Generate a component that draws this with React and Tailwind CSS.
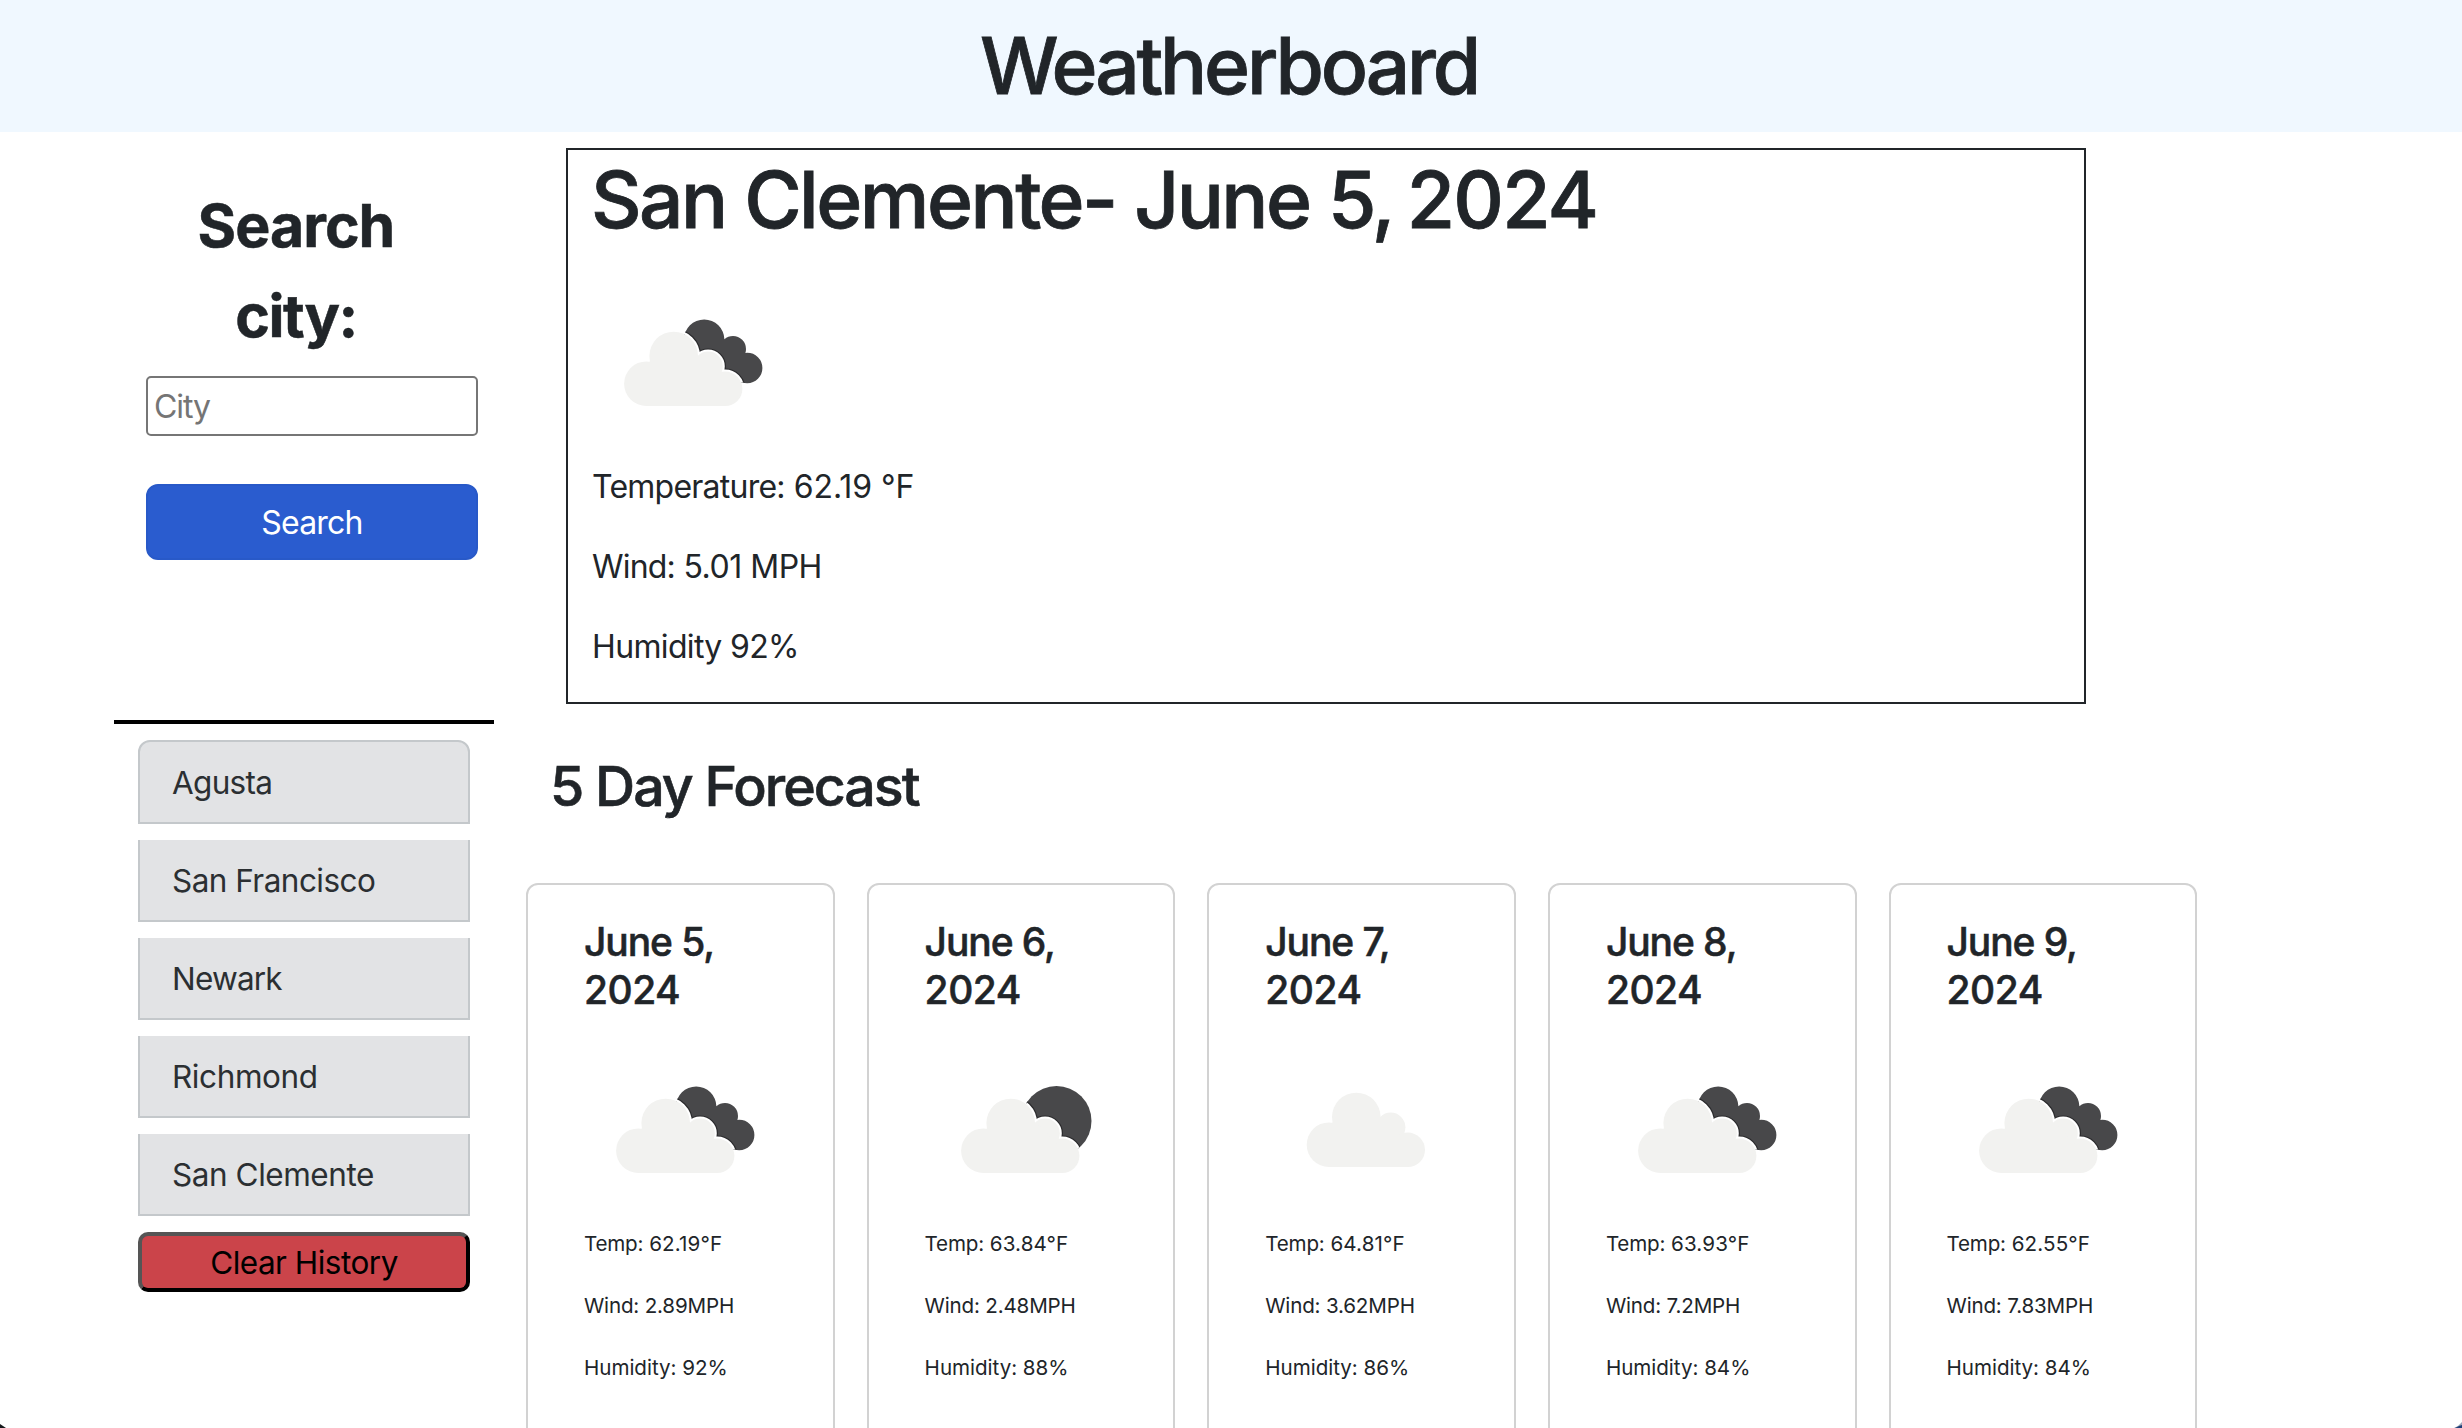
import React from "react";

const history = [
  { name: "Agusta", spacing: "tracking-[-0.69px]" },
  { name: "San Francisco", spacing: "tracking-[-0.54px]" },
  { name: "Newark", spacing: "tracking-[-0.8px]" },
  { name: "Richmond", spacing: "tracking-[-0.4px]" },
  { name: "San Clemente", spacing: "tracking-[-0.45px]" },
];

const forecast = [
  { day: "June 5,", year: "2024", icon: "broken", temp: "62.19", wind: "2.89", humidity: 92 },
  { day: "June 6,", year: "2024", icon: "few", temp: "63.84", wind: "2.48", humidity: 88 },
  { day: "June 7,", year: "2024", icon: "scattered", temp: "64.81", wind: "3.62", humidity: 86 },
  { day: "June 8,", year: "2024", icon: "broken", temp: "63.93", wind: "7.2", humidity: 84 },
  { day: "June 9,", year: "2024", icon: "broken", temp: "62.55", wind: "7.83", humidity: 84 },
];

function CloudShape(props) {
  return (
    <g {...props}>
      <circle cx="91.3" cy="87" r="24.3" />
      <circle cx="64" cy="114.7" r="22.3" />
      <circle cx="125.7" cy="97.3" r="14.7" />
      <circle cx="142.8" cy="119.8" r="17.2" />
      <path d="M64 137V96l6-6 21-10 30 10 18 20 4 10v17z" />
    </g>
  );
}

function BackShape({ kind }) {
  if (kind === "few") return <circle cx="131.5" cy="91" r="35" />;
  return (
    <>
      <circle cx="112.2" cy="76.6" r="20.2" />
      <circle cx="141" cy="86" r="13" />
      <circle cx="155.2" cy="105" r="15.2" />
      <path d="M112 90l20-13 12-1 9 14 4 6-3 24-44-8z" />
    </>
  );
}

function WeatherIcon({ kind, id, className }) {
  const offset =
    kind === "broken" ? "translate(-9.6 6)" : kind === "few" ? "translate(-5.6 6)" : "translate(0 0)";
  return (
    <svg viewBox="0 0 200 200" className={className} aria-hidden="true">
      {kind !== "scattered" && (
        <>
          <defs>
            <clipPath id={id}>
              <BackShape kind={kind} />
            </clipPath>
          </defs>
          <g clipPath={`url(#${id})`}>
            <rect width="200" height="200" fill="#48484a" />
            <g transform={offset}>
              <CloudShape fill="#2b2b2d" stroke="#2b2b2d" strokeWidth="6.4" />
              <CloudShape fill="#ffffff" stroke="#ffffff" strokeWidth="4" />
            </g>
          </g>
        </>
      )}
      <g transform={offset}>
        <CloudShape fill="#f2f2f0" />
      </g>
    </svg>
  );
}

function Sidebar() {
  return (
    <aside className="ml-[114px] w-[380px] shrink-0">
      <form className="ml-8 w-[332px] pt-[49px]" onSubmit={(e) => e.preventDefault()}>
        <label
          htmlFor="city"
          className="block w-[300px] text-center text-[59px] font-bold leading-[90px] [-webkit-text-stroke:0.5px_#212529]"
        >
          <span className="tracking-[-0.98px]">Search</span>{" "}
          <br />
          <span className="tracking-[-1.5px]">city:</span>
        </label>
        <input
          id="city"
          placeholder="City"
          className="mt-[15px] block h-[60px] w-full rounded-[5px] border-2 border-[#767676] bg-white pl-1.5 text-[32px] tracking-[-1.1px] placeholder:text-[#757575]"
        />
        <button className="mt-12 block h-[76px] w-full rounded-xl border-2 border-[#2859c8] bg-[#2a5ccf] pt-0.5 text-[32px] leading-[48px] tracking-[-0.81px] text-white">
          Search
        </button>
      </form>
      <div className="mt-40 h-1 bg-black" />
      <div className="ml-6 mt-4 flex w-[332px] flex-col gap-4">
        {history.map((city, i) => (
          <div
            key={city.name}
            className={`flex items-center border-2 border-[#c4c8cb] bg-[#e2e3e5] pl-8 pt-0.5 text-[31.5px] text-[#2b2f32] ${
              i === 0 ? "h-[84px] rounded-t-xl" : "h-[82px] border-t-0"
            } ${city.spacing}`}
          >
            {city.name}
          </div>
        ))}
        <button className="h-[60px] rounded-[10px] border-4 border-b-black border-l-[#555] border-r-black border-t-[#555] bg-[#cb444a] pt-0.5 text-[31.5px] leading-[48px] tracking-[-0.51px] text-black">
          Clear History
        </button>
      </div>
    </aside>
  );
}

function CurrentWeather() {
  return (
    <section className="ml-10 mt-4 h-[556px] w-[1520px] border-2 border-[#212529] pl-6 pt-0.5">
      <h2 className="-ml-px text-[78.4px] font-medium leading-[96px] tracking-[-2.52px] [-webkit-text-stroke:0.8px_#212529]">
        San Clemente- June 5, <span className="-ml-1 tracking-[-1.7px]">2024</span>
      </h2>
      <WeatherIcon kind="broken" id="back-current" className="mt-[15px] size-[200px]" />
      <div className="flex flex-col gap-8 text-[32px] leading-[48px]">
        <p className="tracking-[-0.08px]">
          <span className="tracking-[-0.76px]">Temperature:</span> 62.19 °F
        </p>
        <p className="tracking-[-0.5px]">
          <span className="tracking-[-0.8px]">Wind:</span> 5.01 MPH
        </p>
        <p className="tracking-[-0.65px]">Humidity 92%</p>
      </div>
    </section>
  );
}

function ForecastCard({ item, index }) {
  return (
    <article className="rounded-xl border-2 border-[#d2d2d2] bg-white pl-[55.8px] pt-[33px]">
      <h4 className="text-[39px] font-medium leading-[48px] [-webkit-text-stroke:0.5px_#212529]">
        <span className="block tracking-[-1.1px]">{item.day}</span>
        <span className="block tracking-[-0.5px]">{item.year}</span>
      </h4>
      <WeatherIcon kind={item.icon} id={`back-${index}`} className="mt-4 size-[200px]" />
      <div className="-mt-0.5 flex flex-col gap-[31px] text-[20.6px] leading-[31px]">
        <p className="tracking-[0.12px]">
          <span className="tracking-[-0.2px]">Temp:</span> {item.temp}°F
        </p>
        <p className="tracking-[-0.18px]">Wind: {item.wind}MPH</p>
        <p className="tracking-[-0.03px]">Humidity: {item.humidity}%</p>
      </div>
    </article>
  );
}

export default function App() {
  return (
    <div className="relative h-[1428px] w-full overflow-hidden bg-white font-['Inter',sans-serif] text-[#212529]">
      <header className="flex h-[132px] items-center justify-center bg-[#f0f8ff] pr-1">
        <h1 className="text-[78.4px] font-medium leading-[96px] tracking-[-3.15px] [-webkit-text-stroke:0.8px_#212529]">
          Weatherboard
        </h1>
      </header>
      <div className="flex">
        <Sidebar />
        <main className="ml-8 shrink-0">
          <CurrentWeather />
          <h3 className="ml-6 mt-[49px] text-[55.5px] font-medium leading-[66px] tracking-[-2px] [-webkit-text-stroke:0.6px_#212529]">
            5 Day Forecast
          </h3>
          <div className="ml-[0.2px] mt-16 grid h-[620px] w-[1671.2px] grid-cols-5 gap-8">
            {forecast.map((item, i) => (
              <ForecastCard key={item.day} item={item} index={i} />
            ))}
          </div>
        </main>
      </div>
      <svg className="absolute bottom-0 left-0 h-1 w-1.5" viewBox="0 0 6 4" aria-hidden="true">
        <path d="M0 0l6 4H0z" fill="#15191c" />
      </svg>
      <svg className="absolute bottom-0 right-0 h-1.5 w-2" viewBox="0 0 8 6" aria-hidden="true">
        <path d="M8 0v6H0l4-2z" fill="#9aa5b8" />
        <path d="M8 3v3H1l4-2z" fill="#1d3f78" />
      </svg>
    </div>
  );
}
